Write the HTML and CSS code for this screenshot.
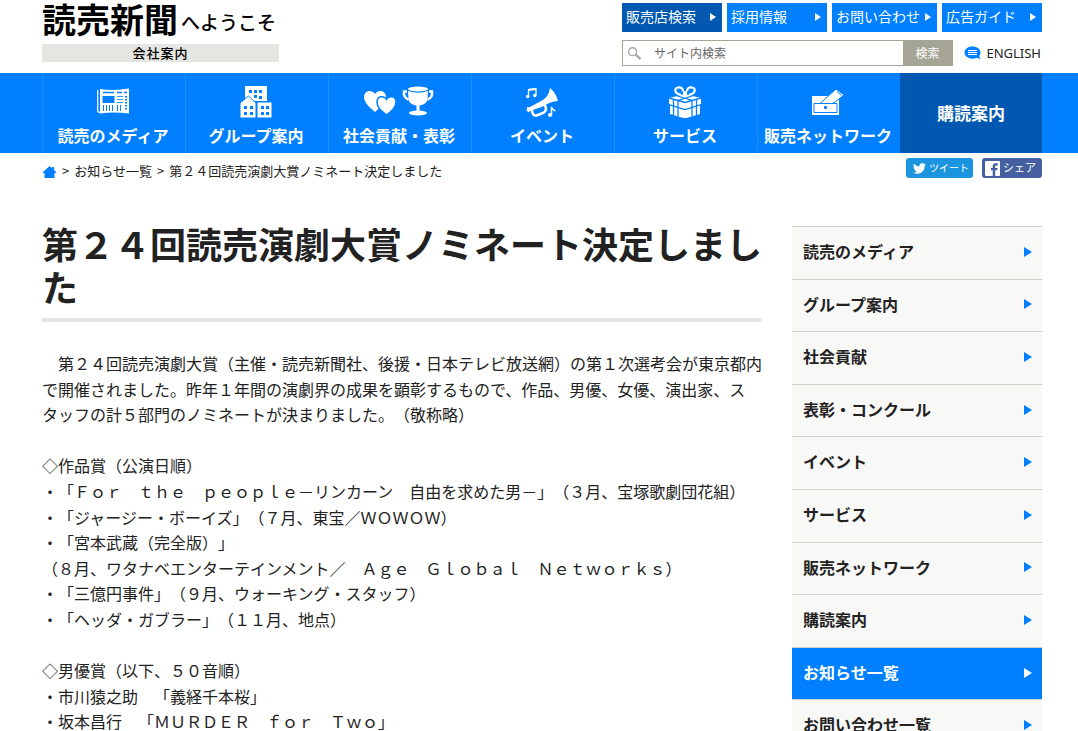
FILE: index.html
```html
<!DOCTYPE html>
<html lang="ja">
<head>
<meta charset="utf-8">
<meta name="viewport" content="width=device-width, initial-scale=1">
<title>第２４回読売演劇大賞ノミネート決定しました</title>
<link rel="stylesheet" href="styles.css">
</head>
<body>
<header class="header wrap">
  <a class="brand" href="#">
    <span class="brand-name"><b class="brand-logo">読売新聞</b><span class="brand-welcome">へようこそ</span></span>
    <span class="brand-section">会社案内</span>
  </a>
  <div class="tools">
    <nav class="quick" aria-label="クイックリンク">
      <a class="quick-link quick-shop" href="#">販売店検索</a>
      <a class="quick-link" href="#">採用情報</a>
      <a class="quick-link quick-contact" href="#">お問い合わせ</a>
      <a class="quick-link" href="#">広告ガイド</a>
    </nav>
    <div class="search-row">
      <form class="search" role="search">
        <svg class="search-icon" viewBox="0 0 16 16" aria-hidden="true"><circle cx="6" cy="6" r="4.2" fill="none" stroke="#aaa" stroke-width="1.6"/><path d="M9 9l5.5 5" stroke="#aaa" stroke-width="2.4"/></svg>
        <input class="search-field" type="text" placeholder="サイト内検索" aria-label="サイト内検索">
        <button class="search-button" type="button">検索</button>
      </form>
      <a class="english" href="#"><svg class="english-icon" viewBox="0 0 17 14" aria-hidden="true"><path d="M8.500 .5C3.800 .5.500 3.200.500 6.500s3.300 6.200 8 6.200c1.600 0 3-.3 4.200-.9L16.500 13l-1.300-2.800C16 9.200 16.500 7.900 16.500 6.500 16.500 3.200 13.200.5 8.500.5z" fill="#0080ff"/><path d="M4 4.500h9M4 6.500h9M4 8.500h9" stroke="#fff"/></svg>ENGLISH</a>
    </div>
  </div>
</header>

<nav class="global" aria-label="メインメニュー">
  <div class="wrap global-inner">
    <a class="global-link" href="#">
      <svg class="icon" viewBox="0 0 32 32" aria-hidden="true"><path d="M.7 4v21q.5 1.500 2 1.500" fill="none" stroke="#fff" stroke-width="1.300"/><path d="M3 3q14 2 29-.5v25q-14.500-2-29 0z" fill="#fff"/><path d="M6 6.500h11M20 6.500h5M27 6.500h3" stroke="#0080ff" stroke-width="1.500"/><path d="M20 10.500h6M20 13.500h6M20 16.500h6" stroke="#0080ff" stroke-width=".8"/><path d="M29 10v15" stroke="#0080ff" stroke-dasharray="1.500 1.500" stroke-width="2"/><path d="M5.500 10h12v7h-12z" fill="#0080ff"/><path d="M6.500 19v6M9.500 19v6M12.500 19v6M15.500 19v6M20.500 19v6M23.500 19v6" stroke="#0080ff"/></svg>
      読売のメディア</a>
    <a class="global-link" href="#">
      <svg class="icon" viewBox="0 0 32 32" aria-hidden="true"><path d="M5 0h22v15H5z" fill="#fff"/><path d="M9 4h3v3H9zm5 0h3v3h-3zm5 0h3v3h-3zm0 6h3v3h-3zm-5-1h3v3h-3z" fill="#0080ff"/><path d="M0 17l8.500-7 7.500 7v15H0zM17 16h15v16H17z" fill="#fff" stroke="#0080ff" stroke-width="1"/><path d="M4 20h3v3H4zm6 0h3v3h-3zm-6 6h3v3H4zm6 0h3v3h-3zm11-6h3v3h-3zm5 0h3v3h-3zm-5 6h3v3h-3zm5 0h3v3h-3z" fill="#0080ff"/></svg>
      グループ案内</a>
    <a class="global-link" href="#">
      <svg class="icon icon-wide" viewBox="0 0 72 32" aria-hidden="true"><path d="M12 26C5 20 1 16 1 11c0-7 8-8 11-3 3-5 11-4 11 3 0 5-4 9-11 15z" fill="#fff"/><path d="M23.500 29C17 24 14 21 14 16c0-6 7-7 9.500-2.500C26 9 33 10 33 16c0 5-3 8-9.500 13z" fill="#fff" stroke="#0080ff" stroke-width="1.500"/><path d="M45 5q10 3.500 20 0l-.5 8c-.5 4-4 6-8 6.500V26h-3v-6.500c-4-.5-7.500-2.500-8-6.500z" fill="#fff"/><ellipse cx="55" cy="3" rx="10" ry="2.500" fill="#fff"/><path d="M44 5.500h-3c-.5 4 1.500 7 4.500 8m20.500-8h3c.5 4-1.500 7-4.500 8" fill="none" stroke="#fff" stroke-width="2.500"/><ellipse cx="55" cy="27" rx="9" ry="2.500" fill="#fff"/></svg>
      社会貢献・表彰</a>
    <a class="global-link" href="#">
      <svg class="icon" viewBox="0 0 32 32" aria-hidden="true"><path d="M24 2Q23 11 15 15L3 21.500 1.500 20.500.5 24.500 3 26.500 4 25 18 20Q24 15.500 32 15 30 7 24 2z" fill="#fff"/><path d="M6 24q0 7 6 5l6-2.500q4-3 0-8.500" fill="none" stroke="#fff" stroke-width="2.500"/><path d="M2.500 10.500V3.500l7.500-1v7" fill="none" stroke="#fff" stroke-width="1.300"/><path d="M2.500 4l7.500-1" stroke="#fff" stroke-width="2"/><circle cx="1.700" cy="10.500" r="1.700" fill="#fff"/><circle cx="8.700" cy="9.500" r="1.700" fill="#fff"/><path d="M25.500 29v-8q1 3 4 4" fill="none" stroke="#fff" stroke-width="1.500"/><circle cx="24" cy="29" r="2" fill="#fff"/></svg>
      イベント</a>
    <a class="global-link" href="#">
      <svg class="icon" viewBox="0 0 32 32" aria-hidden="true"><path d="M12 8.500C5 8 5 2 9 1.500s5 2 5 4M20 8.500c7-.5 7-6.500 3-7s-5 2-5 4" fill="none" stroke="#fff" stroke-width="2.200"/><rect x="14" y="5" width="4" height="4" rx="1" fill="#fff"/><path d="M0 12l16-4 16 4v6l-1 1v9l-15 4.500L1 28v-9l-1-1z" fill="#fff"/><path d="M0 12l16 4.500L32 12M0 18.500l16 5 16-5M7 9.500l16 5v16M25 9.500l-16 5v16M4.500 13.500v16M27.500 13.500v16" fill="none" stroke="#0080ff" stroke-width="1.300"/></svg>
      サービス</a>
    <a class="global-link" href="#">
      <svg class="icon" viewBox="0 0 32 32" aria-hidden="true"><path d="M0 10h27v19H0z" fill="#fff"/><path d="M2 17.500h23v9H2z" fill="#fff" stroke="#0080ff"/><rect x="12" y="20" width="3" height="3" rx="1" fill="#0080ff"/><path d="M8 17.500L24 3l8 6-11 8.500z" fill="#fff" stroke="#0080ff"/><path d="M25 5.500l4.500 4" stroke="#0080ff"/></svg>
      販売ネットワーク</a>
    <a class="global-link global-subscribe" href="#">購読案内</a>
  </div>
</nav>

<div class="wrap trail">
  <nav class="crumbs" aria-label="パンくずリスト">
    <a href="#" aria-label="ホーム"><svg class="home" viewBox="0 0 14 12" aria-hidden="true"><path d="M7 0l2.500 2.300V1h2v3L14 6.500l-.5.500H12v5H2V7H.5L0 6.500z" fill="#0080ff"/></svg></a>
    <span>&gt;</span> <a href="#">お知らせ一覧</a> <span>&gt;</span> <span>第２４回読売演劇大賞ノミネート決定しました</span>
  </nav>
  <div class="share">
    <a class="share-link tweet" href="#"><svg class="bird" viewBox="0 0 24 20" aria-hidden="true"><path d="M24 2.400c-.9.400-1.800.7-2.800.8 1-.6 1.800-1.600 2.200-2.700-1 .6-2 1-3.100 1.200a4.900 4.900 0 0 0-8.400 4.500C7.700 6 4.100 4 1.700 1A4.900 4.900 0 0 0 3.200 7.600C2.400 7.600 1.600 7.400 1 7c0 2.400 1.700 4.400 3.900 4.900-.7.200-1.500.2-2.200.1.600 2 2.400 3.400 4.600 3.400A9.900 9.900 0 0 1 0 17.500 14 14 0 0 0 21.500 5c1-.7 1.800-1.600 2.500-2.600z" fill="#fff"/></svg>ツイート</a>
    <a class="share-link facebook" href="#"><svg class="fb" viewBox="0 0 14 14" aria-hidden="true"><rect width="14" height="14" rx="1" fill="#fff"/><path d="M9.500 14V8.700h2l.3-2.200H9.500V5.200c0-.7.300-1.100 1.200-1.100H12v-2c-.3 0-1-.1-1.800-.1-1.900 0-3 1.100-3 3v1.500H5.500v2.200h1.700V14z" fill="#4460a0"/></svg>シェア</a>
  </div>
</div>

<div class="wrap columns">
  <main class="article">
    <h1 class="title">第２４回読売演劇大賞ノミネート決定しました</h1>
    <p>　第２４回読売演劇大賞（主催・読売新聞社、後援・日本テレビ放送網）の第１次選考会が東京都内で開催されました。昨年１年間の演劇界の成果を顕彰するもので、作品、男優、女優、演出家、スタッフの計５部門のノミネートが決まりました。（敬称略）</p>
    <p>◇作品賞（公演日順）<br>・「Ｆｏｒ　ｔｈｅ　ｐｅｏｐｌｅ－リンカーン　自由を求めた男－」（３月、宝塚歌劇団花組）<br>・「ジャージー・ボーイズ」（７月、東宝／ＷＯＷＯＷ）<br>・「宮本武蔵（完全版）」<br>（８月、ワタナベエンターテインメント／　Ａｇｅ　Ｇｌｏｂａｌ　Ｎｅｔｗｏｒｋｓ）<br>・「三億円事件」（９月、ウォーキング・スタッフ）<br>・「ヘッダ・ガブラー」（１１月、地点）</p>
    <p>◇男優賞（以下、５０音順）<br>・市川猿之助　「義経千本桜」<br>・坂本昌行　「ＭＵＲＤＥＲ　ｆｏｒ　Ｔｗｏ」</p>
  </main>
  <nav class="side" aria-label="サイドメニュー">
    <a class="side-link" href="#">読売のメディア</a>
    <a class="side-link" href="#">グループ案内</a>
    <a class="side-link" href="#">社会貢献</a>
    <a class="side-link" href="#">表彰・コンクール</a>
    <a class="side-link" href="#">イベント</a>
    <a class="side-link" href="#">サービス</a>
    <a class="side-link" href="#">販売ネットワーク</a>
    <a class="side-link" href="#">購読案内</a>
    <a class="side-link side-current" href="#" aria-current="page">お知らせ一覧</a>
    <a class="side-link" href="#">お問い合わせ一覧</a>
  </nav>
</div>
</body>
</html>
```
FILE: styles.css
```css
* { box-sizing: border-box; }
html { scrollbar-width: none; }
body {
  margin: 0;
  background: #fff;
  color: #222;
  font: 16px/1.6 "Noto Sans CJK JP", sans-serif;
  line-break: strict;
  text-spacing-trim: space-all;
}
a { color: inherit; text-decoration: none; }
.wrap { max-width: 1000px; margin: 0 auto; }
@media (min-width: 1060px) {
  .wrap { margin-left: calc(50% - 497px); }
}

.header { display: flex; justify-content: space-between; min-height: 73px; }
.brand { width: 237px; color: #000; }
.brand-name { display: flex; align-items: center; gap: 3px; height: 44px; white-space: nowrap; }
.brand-logo { height: 44px; font-size: 34px; line-height: 38px; font-weight: 700; }
.brand-welcome { font-size: 19px; line-height: 44px; font-weight: 500; }
.brand-section {
  display: block;
  background: #e5e6e1;
  font-size: 13px;
  line-height: 18px;
  letter-spacing: 1px;
  font-weight: 500;
  text-align: center;
}
.tools { width: 420px; padding-top: 3px; }
.quick { display: grid; grid-template-columns: 100px 100px 105px 100px; justify-content: space-between; }
.quick-link {
  display: flex;
  align-items: center;
  justify-content: space-between;
  height: 29px;
  padding: 0 6px 2px 4px;
  background: #0080ff;
  color: #fff;
  font-size: 14px;
  white-space: nowrap;
}
.quick-link::after, .side-link::after {
  content: "";
  border: 4px solid transparent;
  border-left: 6px solid #fff;
  border-right: 0;
}
.quick-shop { background: #0058b0; }
.search-row { display: flex; align-items: center; justify-content: space-between; margin-top: 8px; }
.search { display: flex; align-items: center; width: 331px; height: 26px; border: 1px solid #a5a595; }
.search-icon { width: 15px; height: 15px; margin-left: 4px; }
.search-field {
  flex: 1;
  min-width: 0;
  padding: 0 12px 2px;
  border: 0;
  background: none;
  color: #666;
  font: 12px "Noto Sans CJK JP", sans-serif;
}
.search-field::placeholder { color: #666; opacity: 1; }
.search-button {
  width: 49px;
  height: 26px;
  padding: 0 0 2px;
  border: 0;
  background: #a5a595;
  color: #fff;
  font: 12px "Noto Sans CJK JP", sans-serif;
}
.english { display: flex; align-items: center; gap: 5px; padding-right: 1px; font: 13px "Noto Sans", sans-serif; }
.english-icon { width: 17px; height: 14px; }

.global { background: #0080ff; }
.global-inner { display: grid; grid-template-columns: repeat(6, 143fr) 142fr; }
.global-link {
  display: flex;
  flex-direction: column;
  align-items: center;
  gap: 5px;
  height: 80px;
  padding: 13px 2px 0 0;
  border-left: 1px solid #1a90ff;
  color: #fff;
  font-weight: 700;
  line-height: 24px;
  white-space: nowrap;
}
.icon { width: 32px; height: 32px; }
.icon-wide { width: 72px; }
.global-subscribe { justify-content: center; padding: 0; background: #0058b0; border: 0; font-size: 17px; }

.trail { display: flex; justify-content: space-between; padding-top: 5px; }
.crumbs { display: flex; gap: 5px; font-size: 13px; line-height: 26px; }
.home { width: 15px; height: 12px; vertical-align: -2px; }
.share { display: flex; gap: 9px; }
.share-link {
  display: flex;
  align-items: center;
  gap: 3px;
  height: 20px;
  border-radius: 3px;
  color: #fff;
  font-size: 11px;
  white-space: nowrap;
}
.tweet { width: 67px; padding-left: 7px; background: #1b95e0; font-size: 10px; }
.facebook { width: 60px; padding-left: 3px; background: #4460a0; }
.bird { width: 13px; height: 11px; }
.fb { width: 15px; height: 15px; }

.columns { display: grid; grid-template-columns: 1fr 250px; gap: 30px; padding-top: 38px; }
.title {
  margin: 0 0 29px;
  padding-bottom: 10px;
  border-bottom: 4px solid #e5e5e5;
  font-size: 36px;
  line-height: 43px;
}
.article p { margin: 0 0 1.6em; }
.side { padding-top: 4px; }
.side-link {
  display: flex;
  align-items: center;
  justify-content: space-between;
  padding: 12px 10px 14px 11px;
  border-top: 1px solid #d0d0c9;
  background: #f8f8f6;
  font-weight: 700;
}
.side-link::after { border-width: 5px 0 5px 8px; border-left-color: #0080ff; }
.side-current { background: #0080ff; color: #fff; }
.side-current::after { border-left-color: #fff; }
```
